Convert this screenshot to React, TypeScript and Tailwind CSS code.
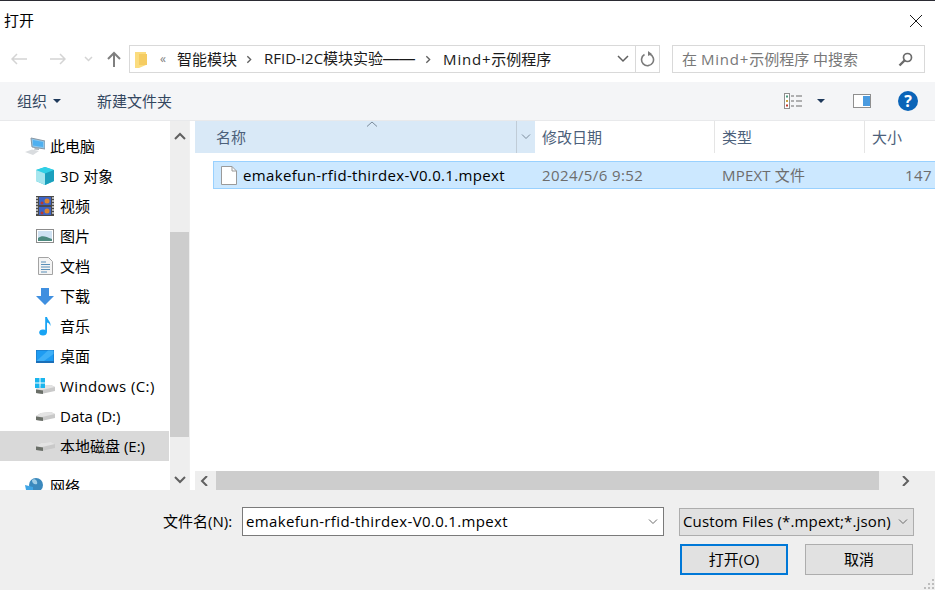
import React from 'react';

const PcIcon = () => (
  <svg width="20" height="18" viewBox="0 0 20 18">
    <path d="M6 1 L20 4 V12 L7 10 Z" fill="#8cc6ec" stroke="#8a97a3" />
    <path d="M8 3 L18 5 V10 L8 8.6 Z" fill="#4fb0f0" />
    <path d="M10 10.5 L14 11 L14 13 L9 12.5 Z" fill="#a9b4bd" />
    <path d="M0 15 L7 12.5 L14 14 L8 18 Z" fill="#d9dcdf" />
  </svg>
);

const CubeIcon = () => (
  <svg width="18" height="18" viewBox="0 0 18 18">
    <path d="M9 0 L18 3 V14 L9 18 L0 14 V3 Z" fill="#37c3d9" />
    <path d="M9 0 L18 3 L9 6.5 L0 3 Z" fill="#2fd0e6" />
    <path d="M0 3 L9 6.5 V18 L0 14 Z" fill="#a7e6ee" />
    <path d="M9 6.5 L18 3 V14 L9 18 Z" fill="#1ba0bd" />
  </svg>
);

const FilmIcon = () => (
  <svg width="18" height="20" viewBox="0 0 18 20">
    <rect width="18" height="20" fill="#4a4a4a" />
    <path d="M1 1 V19 M17 1 V19" stroke="#b5b5b5" strokeWidth="2" strokeDasharray="2 1" />
    <rect x="3" y="1" width="12" height="8" fill="#3d63c4" />
    <rect x="3" y="11" width="12" height="8" fill="#3d63c4" />
    <circle cx="11" cy="5" r="2.5" fill="#d9832f" />
    <circle cx="11" cy="15" r="2.5" fill="#d9832f" />
    <circle cx="6" cy="7" r="1.5" fill="#b8382d" />
    <circle cx="6" cy="17" r="1.5" fill="#b8382d" />
  </svg>
);

const PictureIcon = () => (
  <svg width="18" height="14" viewBox="0 0 18 14">
    <rect x="0.5" y="0.5" width="17" height="13" fill="#fff" stroke="#8c8c8c" />
    <rect x="2" y="2" width="14" height="10" fill="#cfe2f3" />
    <path d="M2 9 C6 6 9 7 16 10 V12 H2 Z" fill="#4d8a80" />
  </svg>
);

const DocIcon = () => (
  <svg width="15" height="18" viewBox="0 0 15 18">
    <path d="M0.5 0.5 H10.5 L14.5 4.5 V17.5 H0.5 Z" fill="#f4f4f4" stroke="#a3a3a3" />
    <path d="M3 5 H8 M3 7.5 H12 M3 10 H12 M3 12.5 H12 M3 15 H9" stroke="#5a8fb8" />
  </svg>
);

const DownloadIcon = () => (
  <svg width="18" height="17" viewBox="0 0 18 17">
    <path d="M5 0 H13 V8 H18 L9 17 L0 8 H5 Z" fill="#3f8fe0" />
  </svg>
);

const MusicIcon = () => (
  <svg width="12" height="19" viewBox="0 0 12 19">
    <ellipse cx="4" cy="15.5" rx="3.8" ry="3" fill="#19a4f4" />
    <path d="M6.2 0 H8 C8.5 3 12 4.5 11.5 9 C10.8 7 9.5 5.8 8 5.5 V15.5 H6.2 Z" fill="#19a4f4" />
  </svg>
);

const DesktopIcon = () => (
  <svg width="18" height="13" viewBox="0 0 18 13">
    <rect width="18" height="13" fill="#1b6fb8" />
    <rect x="0.5" y="0.5" width="17" height="10.5" fill="#1e9cf2" />
    <path d="M0.5 11 L12 0.5 H17.5 V4 L8 11 Z" fill="#3fb0f7" />
  </svg>
);

const DriveIcon = () => (
  <svg width="19" height="9" viewBox="0 0 19 9">
    <path d="M0 4 L5 1 L15 0 L19 2 V6 L5 9 L0 8 Z" fill="#c9c9c9" />
    <path d="M0 4 L5 1 L15 0 L19 2 L6 5 Z" fill="#e3e3e3" />
    <path d="M0 4.5 L7 5.5 V9 L0 8 Z" fill="#6a6f68" />
  </svg>
);

const WinDriveIcon = () => (
  <span className="relative flex h-[15px] w-[19px] items-end">
    <DriveIcon />
    <svg className="absolute -left-[1px] -top-[1px]" width="10" height="10" viewBox="0 0 10 10">
      <path d="M0 0 H4.5 V4.5 H0 Z M5.5 0 H10 V4.5 H5.5 Z M0 5.5 H4.5 V10 H0 Z M5.5 5.5 H10 V10 H5.5 Z" fill="#1ab5ee" />
    </svg>
  </span>
);

const NetIcon = () => (
  <svg width="19" height="17" viewBox="0 0 19 17">
    <circle cx="11" cy="7" r="7" fill="#3b89bd" />
    <path d="M7 2 C10 0 13 3 12 6 C9 7 7 5 7 2 Z" fill="#9fcde6" />
    <path d="M0 7 L8 9 V17 H2 Z" fill="#3fa5e6" />
  </svg>
);

const sideItems = [
  { label: '此电脑', icon: <PcIcon />, top: true },
  { label: '3D 对象', icon: <CubeIcon /> },
  { label: '视频', icon: <FilmIcon /> },
  { label: '图片', icon: <PictureIcon /> },
  { label: '文档', icon: <DocIcon /> },
  { label: '下载', icon: <DownloadIcon /> },
  { label: '音乐', icon: <MusicIcon /> },
  { label: '桌面', icon: <DesktopIcon /> },
  { label: 'Windows (C:)', icon: <WinDriveIcon />, wide: true },
  { label: 'Data (D:)', icon: <DriveIcon /> },
  { label: '本地磁盘 (E:)', icon: <DriveIcon />, selected: true },
];

const Chevron = ({ dir, className }: { dir: 'up' | 'down' | 'left' | 'right'; className?: string }) => {
  const d = {
    up: 'M1 7 L6 2 L11 7',
    down: 'M1 2 L6 7 L11 2',
    left: 'M7 0 L2 5 L7 10',
    right: 'M2 0 L7 5 L2 10',
  }[dir];
  return (
    <svg className={className} width="12" height="10" viewBox="0 0 12 10" fill="none" stroke="#606060" strokeWidth="2">
      <path d={d} />
    </svg>
  );
};

function NavBar() {
  return (
    <div className="flex h-[42px] items-start bg-white pt-[5px]">
      <div className="flex h-[28px] w-[129px] items-center">
        <svg className="ml-[11px]" width="16" height="12" viewBox="0 0 16 12" fill="none" stroke="#d4d4d4" strokeWidth="1.5">
          <path d="M16 6 H1 M6 1 L1 6 L6 11" />
        </svg>
        <svg className="ml-[23px]" width="16" height="12" viewBox="0 0 16 12" fill="none" stroke="#d4d4d4" strokeWidth="1.5">
          <path d="M0 6 H15 M10 1 L15 6 L10 11" />
        </svg>
        <svg className="ml-[18px]" width="9" height="6" viewBox="0 0 9 6" fill="none" stroke="#d4d4d4" strokeWidth="1.5">
          <path d="M1 1 L4.5 4.5 L8 1" />
        </svg>
        <svg className="ml-[14px]" width="14" height="16" viewBox="0 0 14 16" fill="none" stroke="#7f7f7f" strokeWidth="2">
          <path d="M7 16 V2 M1 8 L7 2 L13 8" />
        </svg>
      </div>
      <div className="flex h-[28px] w-[531px] items-center border border-[#d9d9d9] text-[15px] text-[#1a1a1a]">
        <svg className="ml-[5px]" width="12" height="17" viewBox="0 0 12 17">
          <path d="M0 1 H11 V14 L4 17 H0 Z" fill="#fbdc7e" />
          <path d="M4 3 H12 V14 H4 Z" fill="#f5cc62" />
        </svg>
        <span className="ml-[13px] text-[12px] text-[#808080]">«</span>
        <span className="ml-[11px]">智能模块</span>
        <Chevron dir="right" className="ml-[9px] h-[9px] w-[8px]" />
        <span className="ml-[10px]">
          RFID-I2C模块实验<span className="font-['Liberation_Sans'] text-[16px]">——</span>
        </span>
        <Chevron dir="right" className="ml-[10px] h-[9px] w-[8px]" />
        <span className="ml-[10px]">
          <span className="tracking-[0.8px]">Mind+</span>示例程序
        </span>
        <span className="flex-1" />
        <svg width="12" height="8" viewBox="0 0 12 8" fill="none" stroke="#606060" strokeWidth="1.5" className="mr-[6px]">
          <path d="M1 1 L6 6 L11 1" />
        </svg>
        <span className="flex h-full w-[24px] items-center justify-center border-l border-[#d9d9d9]">
          <svg width="15" height="16" viewBox="0 0 15 16" fill="none" stroke="#7a7a7a" strokeWidth="1.6">
            <path d="M9.5 3 A6 6 0 1 1 4.5 3.5" />
            <path d="M8 0 L8 5 L12 3 Z" fill="#7a7a7a" stroke="none" />
          </svg>
        </span>
      </div>
      <div className="ml-[12px] flex h-[28px] w-[253px] items-center justify-between border border-[#d9d9d9] pl-[9px] pr-[11px] text-[15px] text-[#787878]">
        <span>
          在 <span className="tracking-[0.8px]">Mind+</span>示例程序 中搜索
        </span>
        <svg width="15" height="15" viewBox="0 0 15 15" fill="none" stroke="#6b6b6b">
          <circle cx="9.5" cy="5.5" r="4" strokeWidth="1.7" />
          <path d="M6.5 8.5 L1.5 13.5" strokeWidth="2.4" />
        </svg>
      </div>
    </div>
  );
}

function ToolBar() {
  return (
    <div className="flex h-[38px] items-center bg-[#f4f5f7] pl-[17px] pr-[17px] text-[15px] text-[#33475f]">
      <span>组织</span>
      <span className="ml-[6px] h-0 w-0 border-x-[4px] border-t-[4px] border-x-transparent border-t-[#1e395b]" />
      <span className="ml-[36px]">新建文件夹</span>
      <span className="flex-1" />
      <svg width="19" height="16" viewBox="0 0 19 16" fill="none">
        <rect x="0.5" y="0.5" width="5" height="15" fill="#fff" stroke="#8f8f8f" />
        <rect x="2" y="2.5" width="2" height="2" fill="#4c9a7c" />
        <rect x="2" y="7" width="2" height="2" fill="#c9a33f" />
        <rect x="2" y="11.5" width="2" height="2" fill="#c03a2b" />
        <path d="M7 3 H10 M12 3 H18 M7 8 H10 M12 8 H18 M7 13 H10 M12 13 H18" stroke="#6b6b6b" />
      </svg>
      <span className="ml-[14px] h-0 w-0 border-x-[4px] border-t-[4px] border-x-transparent border-t-[#1e395b]" />
      <svg className="ml-[28px]" width="18" height="14" viewBox="0 0 18 14">
        <rect x="0.5" y="0.5" width="17" height="13" fill="#fff" stroke="#8f8f8f" />
        <rect x="10" y="2" width="7" height="10" fill="#4a9be0" />
      </svg>
      <span className="ml-[27px] flex h-[20px] w-[20px] items-center justify-center rounded-full bg-[#0a64b8] text-[16px] font-bold leading-none text-white">?</span>
    </div>
  );
}

function SideBar() {
  return (
    <div className="flex h-full w-[195px] shrink-0">
      <div className="flex h-full w-[170px] flex-col overflow-hidden pt-[10px] text-[15px] text-black">
        {sideItems.map((item) => (
          <div
            key={item.label}
            className={`flex h-[30px] w-[169px] shrink-0 items-center ${item.selected ? 'bg-[#d9d9d9]' : ''}`}
          >
            <span className={`flex ${item.top ? 'ml-[25px] w-[25px] justify-start' : 'ml-[35px] w-[20px] justify-center'}`}>{item.icon}</span>
            <span className={`${item.top ? '' : 'ml-[5px]'} ${item.wide ? 'tracking-[0.4px]' : ''}`}>{item.label}</span>
          </div>
        ))}
        <div className="mt-[10px] flex h-[30px] w-[169px] shrink-0 items-center">
          <span className="ml-[25px] flex w-[25px] justify-start"><NetIcon /></span>
          <span>网络</span>
        </div>
      </div>
      <div className="flex h-full w-[19px] flex-col bg-[#eeeeee]">
        <div className="flex h-[31px] items-center justify-center pt-[1px]"><Chevron dir="up" /></div>
        <div className="mt-[80px] h-[205px] bg-[#cdcdcd]" />
        <div className="flex-1" />
        <div className="flex h-[20px] items-center justify-center"><Chevron dir="down" /></div>
      </div>
      <div className="h-full w-[1px] bg-[#f0f0f0]" />
    </div>
  );
}

function FileList() {
  return (
    <div className="flex h-full min-w-0 flex-1 flex-col overflow-hidden">
      <div className="flex h-[32px] shrink-0 text-[15px] text-[#4c607a]">
        <div className="relative flex w-[321px] items-center bg-[#d9e9f7] pl-[21px]">
          <span>名称</span>
          <svg className="absolute left-[171px] top-[0px]" width="12" height="6" viewBox="0 0 12 6" fill="none" stroke="#7a8a9a">
            <path d="M1 5.5 L6 1 L11 5.5" />
          </svg>
        </div>
        <div className="flex w-[19px] items-center justify-center border-l border-[#c0ccd7] bg-[#d9e9f7]">
          <svg width="10" height="6" viewBox="0 0 10 6" fill="none" stroke="#7a8a9a">
            <path d="M1 0.5 L5 4.5 L9 0.5" />
          </svg>
        </div>
        <div className="flex w-[180px] items-center border-r border-[#e5e5e5] pl-[7px]">修改日期</div>
        <div className="flex w-[150px] items-center border-r border-[#e5e5e5] pl-[7px]">类型</div>
        <div className="flex flex-1 items-center pl-[7px]">大小</div>
      </div>
      <div className="ml-[18px] mt-[8px] flex h-[28px] w-[760px] shrink-0 items-center whitespace-nowrap border border-[#99d1ff] bg-[#cce8ff] text-[15px] text-[#6d6d6d]">
        <div className="flex w-[322px] items-center pl-[7px] text-black">
          <svg width="16" height="19" viewBox="0 0 16 19" fill="none">
            <path d="M0.5 0.5 H11 L15.5 5 V18.5 H0.5 Z" fill="#fff" stroke="#9a9a9a" />
            <path d="M11 0.5 V5 H15.5" stroke="#9a9a9a" />
          </svg>
          <span className="ml-[6px] tracking-[0.35px]">emakefun-rfid-thirdex-V0.0.1.mpext</span>
        </div>
        <div className="w-[180px] pl-[6px] tracking-[0.4px]">2024/5/6 9:52</div>
        <div className="w-[150px] pl-[6px] tracking-[0.2px]">MPEXT 文件</div>
        <div className="flex-1 pl-[39px] tracking-[0.4px]">147</div>
      </div>
      <div className="flex-1" />
      <div className="flex h-[19px] shrink-0 items-center bg-[#eeeeee]">
        <span className="flex w-[21px] justify-center"><Chevron dir="left" /></span>
        <div className="h-full w-[663px] bg-[#cdcdcd]" />
        <span className="flex flex-1 justify-center"><Chevron dir="right" /></span>
      </div>
    </div>
  );
}

function Footer() {
  return (
    <div className="relative h-[100px] bg-[#efefef] pt-[17px] text-[15px] text-black">
      <div className="flex h-[29px] items-center">
        <span className="ml-[163px] w-[79px]">文件名(N):</span>
        <div className="flex h-full w-[422px] items-center border border-[#7a7a7a] bg-white pl-[3px]">
          <span className="tracking-[0.35px]">emakefun-rfid-thirdex-V0.0.1.mpext</span>
          <span className="flex-1" />
          <svg className="mr-[5px]" width="10" height="6" viewBox="0 0 10 6" fill="none" stroke="#6b6b6b">
            <path d="M1 0.5 L5 4.5 L9 0.5" />
          </svg>
        </div>
        <div className="ml-[15px] flex h-[28px] w-[235px] items-center whitespace-nowrap border border-[#adadad] bg-[#e1e1e1] pl-[3px]">
          <span className="tracking-[0.14px]">Custom Files (*.mpext;*.json)</span>
          <span className="flex-1" />
          <svg className="mr-[5px]" width="10" height="6" viewBox="0 0 10 6" fill="none" stroke="#6b6b6b">
            <path d="M1 0.5 L5 4.5 L9 0.5" />
          </svg>
        </div>
      </div>
      <div className="mt-[8px] flex justify-end gap-[17px] pr-[22px]">
        <button className="h-[31px] w-[108px] border-2 border-[#0078d7] bg-[#e1e1e1]">打开(O)</button>
        <button className="h-[31px] w-[108px] border border-[#adadad] bg-[#e1e1e1]">取消</button>
      </div>
      <svg className="absolute bottom-0 right-0" width="12" height="12" viewBox="0 0 12 12" fill="#bdbdbd">
        <path d="M9 1 h2 v2 h-2 Z M5 5 h2 v2 h-2 Z M9 5 h2 v2 h-2 Z M1 9 h2 v2 h-2 Z M5 9 h2 v2 h-2 Z M9 9 h2 v2 h-2 Z" />
      </svg>
    </div>
  );
}

export default function App() {
  return (
    <div className="flex h-[590px] w-[935px] flex-col overflow-hidden bg-white font-['Open_Sans','Noto_Sans_CJK_SC',sans-serif]">
      <div className="h-[1px] shrink-0 bg-[#2b2b33]" />
      <div className="flex h-[39px] shrink-0 items-center justify-between bg-white pl-[4px] pr-[12px] text-[15px] text-black">
        <span>打开</span>
        <svg width="14" height="14" viewBox="0 0 14 14" fill="none" stroke="#1a1a1a">
          <path d="M1 1 L13 13 M13 1 L1 13" />
        </svg>
      </div>
      <NavBar />
      <ToolBar />
      <div className="h-[1px] shrink-0 bg-[#e8e9eb]" />
      <div className="flex min-h-0 flex-1">
        <SideBar />
        <FileList />
      </div>
      <Footer />
    </div>
  );
}
